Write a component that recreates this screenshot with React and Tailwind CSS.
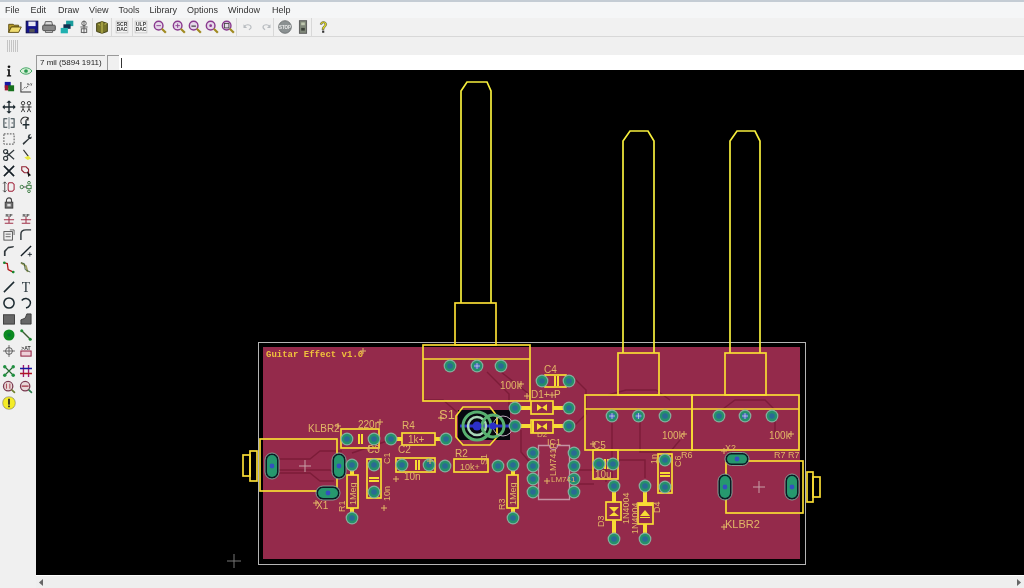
import React from "react";

const menus = [["File", 11], ["Edit", 12], ["Draw", 10], ["View", 10], ["Tools", 10], ["Library", 10], ["Options", 10], ["Window", 12], ["Help", 0]];

// small helper so every toolbar icon has the same box
const Ico = ({ children }) => (
  <svg width="16" height="16" viewBox="0 0 16 16" fill="none" className="block">
    {children}
  </svg>
);

const Zoom = ({ children }) => (
  <Ico>
    <circle cx="6.5" cy="6.5" r="4.8" fill="#e6d8ea" stroke="#8a3a8f" strokeWidth="1.6" />
    <path d="M10 10l4.5 4.5" stroke="#a08a20" strokeWidth="2.4" />
    {children}
  </Ico>
);

const Dac = ({ t }) => (
  <Ico>
    <rect x="1.5" y="1.5" width="13" height="13" fill="#f4f4f4" stroke="#c8c8c8" />
    <text x="8" y="7" textAnchor="middle" fontSize="5.5" fontWeight="700" fill="#333" fontFamily="Liberation Sans, sans-serif">{t}</text>
    <text x="8" y="13" textAnchor="middle" fontSize="5.5" fontWeight="700" fill="#333" fontFamily="Liberation Sans, sans-serif">DAC</text>
  </Ico>
);

const topIcons = [
  { w: 17, el: <Ico><path d="M1 5h5l1 1h5v2H4l-3 6z" fill="#b59a2a" stroke="#5a4a10" /><path d="M4 8h11l-3 6H1z" fill="#f0dc70" stroke="#5a4a10" /></Ico> },
  { w: 17, el: <Ico><rect x="1.5" y="1.5" width="13" height="13" fill="#14148c" stroke="#050540" /><rect x="4" y="2" width="8" height="5" fill="#e8e8f4" /><rect x="5" y="10" width="6" height="4" fill="#555" /></Ico> },
  { w: 17, el: <Ico><path d="M4 2h7l1 4H3z" fill="#ddd" stroke="#555" /><rect x="1" y="6" width="14" height="6" rx="1" fill="#888" stroke="#444" /><path d="M4 12h8v2H4z" fill="#ccc" stroke="#555" /></Ico> },
  { w: 19, el: <Ico><rect x="7" y="1" width="8" height="6" fill="#1a9c9c" /><rect x="4" y="5" width="8" height="5" fill="#103050" /><rect x="1" y="9" width="8" height="6" fill="#20b0b0" /></Ico> },
  { w: 17, sep: true, el: <Ico><circle cx="8" cy="4" r="2.5" stroke="#555" /><path d="M8 1v14M4 8h8" stroke="#555" /><rect x="5" y="10" width="6" height="4" stroke="#555" /></Ico> },
  { w: 19, sep: true, el: <Ico><path d="M2 4l6-2 6 2v9l-6 2-6-2z" fill="#77752a" stroke="#3e3c10" /><path d="M8 2v13" stroke="#d8d060" /><path d="M4 5l2 1M11 5l2-1" stroke="#d8d060" /></Ico> },
  { w: 21, sep: true, el: <Dac t="SCR" /> },
  { w: 16, el: <Dac t="ULP" /> },
  { w: 21, el: <Zoom><path d="M4 6.5h5" stroke="#8a3a8f" /></Zoom> },
  { w: 17, el: <Zoom><path d="M4 6.5h5M6.5 4v5" stroke="#8a3a8f" /></Zoom> },
  { w: 16, el: <Zoom><path d="M4 7h5" stroke="#444" strokeWidth="1.4" /></Zoom> },
  { w: 17, el: <Zoom><circle cx="6.5" cy="6.5" r="1.5" fill="#8a3a8f" /></Zoom> },
  { w: 17, sep: true, el: <Zoom><rect x="4" y="4" width="5" height="5" stroke="#444" /></Zoom> },
  { w: 21, el: <Ico><path d="M4 7c2-2 6-2 7 0 1 2 0 3-2 4" stroke="#b8bcc0" strokeWidth="1.3" /><path d="M3 5v4h4z" fill="#b8bcc0" /></Ico> },
  { w: 16, sep: true, el: <Ico><path d="M12 7c-2-2-6-2-7 0-1 2 0 3 2 4" stroke="#b8bcc0" strokeWidth="1.3" /><path d="M13 5v4H9z" fill="#b8bcc0" /></Ico> },
  { w: 21, el: <Ico><circle cx="8" cy="8" r="7" fill="#8b9192" stroke="#6d7273" /><text x="8" y="10" textAnchor="middle" fontSize="5" fontWeight="700" fill="#eee" fontFamily="Liberation Sans, sans-serif">STOP</text></Ico> },
  { w: 17, sep: true, el: <Ico><rect x="4" y="1" width="8" height="14" fill="#80887a" stroke="#555" /><rect x="6" y="3" width="4" height="3" fill="#c0c8b0" /><rect x="6" y="9" width="4" height="3" fill="#3a4038" /></Ico> },
  { w: 21, el: <Ico><path d="M5 5c0-4 7-4 7 0 0 3-3 3-3 6H7c0-4 3-4 3-6 0-2-3-2-3 0z" fill="#e8e020" stroke="#333" strokeWidth=".6" /><rect x="7" y="12" width="2.4" height="2.4" fill="#333" /></Ico> },
];

const Line = ({ d, c = "#222", w = 1.6 }) => <path d={d} stroke={c} strokeWidth={w} />;

const rip = (
  <Ico>
    <path d="M2 9h12M8 5v8M3 13h10" stroke="#a03048" strokeWidth="1.2" />
    <text x="8" y="6" textAnchor="middle" fontSize="5" fontWeight="700" fill="#444" fontFamily="Liberation Sans, sans-serif">RIP</text>
  </Ico>
);

const sideGroups = [
  [
    <Ico><circle cx="8" cy="3" r="1.6" fill="#111" /><path d="M6 6h3v7h1.5v1.5h-5V13H7V7.5H6z" fill="#111" /></Ico>,
    <Ico><path d="M1 8c3-5 11-5 14 0-3 5-11 5-14 0z" fill="#d8f0d8" stroke="#2a9a50" /><circle cx="8" cy="8" r="2.2" fill="#2a9a50" /></Ico>,
    <Ico><rect x="3" y="2" width="7" height="7" fill="#1515a0" /><rect x="7" y="6" width="7" height="7" fill="#16701c" /><rect x="3" y="6" width="4" height="6" fill="#a01530" /></Ico>,
    <Ico><Line d="M2 2v12h12" c="#333" w="1.2" /><path d="M4 11l3-3 2 1 3-5" stroke="#444" strokeDasharray="1.5 1" /><text x="9" y="6" fontSize="5" fill="#333" fontFamily="Liberation Sans, sans-serif">x,y</text></Ico>,
  ],
  [
    <Ico><Line d="M8 1v14M1 8h14" c="#1e2a30" /><path d="M8 0l3 3H5zM8 16l3-3H5zM0 8l3-3v6zM16 8l-3-3v6z" fill="#1e2a30" /></Ico>,
    <Ico><g stroke="#333" strokeWidth="1.1"><circle cx="4.5" cy="3.5" r="2" /><circle cx="11.5" cy="3.5" r="2" /><path d="M4.5 6v4l-2 4M4.5 10l2 4M1.5 8h6M11.5 6v4l-2 4M11.5 10l2 4M8.5 8h6" /></g></Ico>,
    <Ico><Line d="M8 1v14" c="#6a7a80" w="1" /><path d="M6 3H2v10h4M10 3h4v10h-4" stroke="#2a3a40" strokeWidth="1.2" /><path d="M3 8h2M11 8h2" stroke="#2a3a40" /></Ico>,
    <Ico><path d="M3 9a5 5 0 0 1 8-6" stroke="#333" strokeWidth="1.4" /><path d="M11 1v4H7z" fill="#333" /><Line d="M8 5v10M4 10h8" c="#1e2a30" /></Ico>,
    <Ico><rect x="2" y="2" width="12" height="12" stroke="#333" strokeDasharray="2 1.5" /></Ico>,
    <Ico><path d="M14 2l-3 1-1 3 1 1-7 6 1 2 7-7 2 0 1-3-2 1-1-1z" fill="#30383c" /></Ico>,
    <Ico><path d="M14 2L5 10M14 13L5 5" stroke="#30383c" strokeWidth="1.5" /><circle cx="4" cy="4" r="2.4" stroke="#30383c" strokeWidth="1.4" /><circle cx="4" cy="12" r="2.4" stroke="#30383c" strokeWidth="1.4" /></Ico>,
    <Ico><path d="M5 2l6 8" stroke="#333" strokeWidth="1.3" /><path d="M6 11l5-2 3 3-4 2z" fill="#eaea40" /></Ico>,
    <Ico><path d="M2 2l12 12M14 2L2 14" stroke="#151f26" strokeWidth="2" /></Ico>,
    <Ico><path d="M3 3h5l3 3v4H6L3 7z" stroke="#902030" strokeWidth="1.3" /><path d="M9 8l5 5-2 .5-1 2z" fill="#111" /></Ico>,
    <Ico><path d="M3 2v12M1 4l2-2 2 2M1 12l2 2 2-2" stroke="#333" /><path d="M8 3h4l2 2v6l-2 2H8l-1-2V5z" stroke="#a02038" strokeWidth="1.2" /></Ico>,
    <Ico><circle cx="3" cy="8" r="2" stroke="#287030" /><path d="M5 8h4" stroke="#333" /><rect x="9" y="6" width="5" height="4" stroke="#287030" /><circle cx="11.5" cy="3" r="1.6" stroke="#287030" /><circle cx="11.5" cy="13" r="1.6" stroke="#287030" /></Ico>,
    <Ico><path d="M5 7V5a3 3 0 0 1 6 0v2" stroke="#444" strokeWidth="1.3" /><rect x="3.5" y="7" width="9" height="7" fill="#707070" stroke="#333" /><rect x="6" y="9" width="4" height="3" fill="#ddd" /></Ico>,
    <span />,
    rip,
    rip,
    <Ico><rect x="2" y="4" width="10" height="10" stroke="#444" /><path d="M4 7h6M4 10h6M9 2h5v6" stroke="#555" /></Ico>,
    <Ico><path d="M2 14V7q0-5 6-5h6" stroke="#30383c" strokeWidth="1.7" /></Ico>,
    <Ico><path d="M2 14V8l5-5 7-1-1 2-6 1-3 4v5z" fill="#30383c" /></Ico>,
    <Ico><Line d="M2 14L14 2" c="#151f26" /><path d="M10 12h5M12.5 9.5v5" stroke="#151f26" /></Ico>,
    <Ico><Line d="M2 3l4 1 1 7 6 3" c="#b01818" w="1.5" /><circle cx="2.5" cy="3" r="1.6" fill="#168a30" /><circle cx="13" cy="14" r="1.6" fill="#168a30" /></Ico>,
    <Ico><Line d="M2 3l6 4 2 7" c="#a0a060" w="2" /><Line d="M2 3l4 1 1 7 6 3" c="#305030" w="1" /></Ico>,
  ],
  [
    <Ico><Line d="M2 14L14 2" c="#1c2a30" w="1.8" /></Ico>,
    <Ico><text x="8" y="14" textAnchor="middle" fontSize="16" fill="#1c2a30" fontFamily="Liberation Serif, serif">T</text></Ico>,
    <Ico><circle cx="8" cy="8" r="6" stroke="#1c2a30" strokeWidth="1.8" /></Ico>,
    <Ico><path d="M3 5a6 6 0 0 1 10 1c1 3-1 7-5 8" stroke="#1c2a30" strokeWidth="1.8" /></Ico>,
    <Ico><rect x="1.5" y="3" width="13" height="11" fill="#666" stroke="#333" /></Ico>,
    <Ico><path d="M2 14V9l5-2 2-5h5v12z" fill="#666" stroke="#333" /></Ico>,
    <Ico><circle cx="8" cy="8" r="6.5" fill="#0c8a20" /><circle cx="8" cy="8" r="2" fill="#073" /></Ico>,
    <Ico><Line d="M3 3l10 10" c="#3a5a30" w="1.6" /><circle cx="3" cy="3" r="1.8" fill="#1a8a30" /><circle cx="13" cy="13" r="1.8" fill="#1a8a30" /></Ico>,
    <Ico><circle cx="8" cy="8" r="4" stroke="#444" /><path d="M8 1v14M1 8h14" stroke="#555" /></Ico>,
    <Ico><text x="8" y="6.5" textAnchor="middle" fontSize="6" fontWeight="700" fill="#333" fontFamily="Liberation Sans, sans-serif">{">AT"}</text><rect x="2" y="8" width="12" height="6" fill="#eed0d8" stroke="#902040" strokeWidth="1.2" /></Ico>,
  ],
  [
    <Ico><path d="M3 3l10 10M13 3L3 13" stroke="#256a30" strokeWidth="1.4" /><circle cx="3" cy="3" r="2" fill="#1f9040" /><circle cx="13" cy="3" r="2" fill="#1f9040" /><circle cx="3" cy="13" r="2" fill="#1f9040" /><circle cx="13" cy="13" r="2" fill="#1f9040" /></Ico>,
    <Ico><path d="M5 1v14M11 1v14" stroke="#a01870" strokeWidth="1.6" /><path d="M1 5h14" stroke="#1818a0" strokeWidth="1.6" /><path d="M1 11h14" stroke="#b01820" strokeWidth="1.6" /></Ico>,
    <Ico><circle cx="7" cy="7" r="5.5" fill="#e8d8d8" stroke="#7a3a50" strokeWidth="1.5" /><path d="M5 4v6M9 4v6" stroke="#a03040" /><path d="M11 11l4 4" stroke="#708030" strokeWidth="2" /></Ico>,
    <Ico><circle cx="7" cy="7" r="5.5" fill="#e8d8d8" stroke="#7a3a50" strokeWidth="1.5" /><path d="M3 7h8" stroke="#a03040" strokeWidth="1.5" /><path d="M11 11l4 4" stroke="#308050" strokeWidth="2" /></Ico>,
  ],
  [
    <Ico><circle cx="8" cy="8" r="7.5" fill="#f4ec28" stroke="#555" strokeWidth=".6" /><rect x="7" y="3" width="2" height="7" fill="#222" /><rect x="7" y="11" width="2" height="2" fill="#222" /></Ico>,
  ],
];

const YEL = "#f8dc34";
const TXT = "#e2b766";
const pads = [
  [450, 366], [477, 366, 1], [501, 366], [612, 416, 1], [638.5, 416, 1], [665, 416], [719, 416], [745, 416, 1], [772, 416],
  [347, 439], [374, 439], [391, 439], [446, 439], [515, 408], [569, 408], [515, 426], [569, 426], [542, 381], [569, 381],
  [352, 465], [352, 518], [374, 465], [374, 492], [402, 465], [429, 465], [445, 466], [498, 466], [513, 465], [513, 518],
  [533, 453], [533, 466], [533, 479], [533, 492], [574, 453], [574, 466], [574, 479], [574, 492],
  [599, 464], [613, 464], [665, 460], [665, 487], [614, 486], [614, 539], [645, 486], [645, 539],
];
const ovals = [
  [272, 466, 12, 24], [339, 466, 12, 24], [328, 493, 22, 12], [725, 487, 12, 24], [792, 487, 12, 24], [737, 459, 22, 11],
];
const rects = [
  [423, 345, 107, 56], [585, 395, 107, 55], [692, 395, 107, 55], [455, 303, 41, 42], [618, 353, 41, 42], [725, 353, 41, 42],
  [260, 439, 77, 52], [726, 461, 77, 52], [341, 429, 38, 19], [402, 433, 33, 12], [545, 375, 21, 12], [531, 401, 22, 13], [531, 420, 22, 13],
  [367, 459, 14, 39], [396, 458, 39, 14], [347, 475, 11, 33], [454, 459, 34, 13], [507, 475, 11, 33], [593, 450, 25, 29], [658, 454, 14, 39],
  [606, 502, 15, 18], [638, 503, 15, 21], [250, 451, 7, 30], [243, 455, 7, 21], [807, 472, 6, 30], [813, 477, 7, 20],
];
const labels = [
  ["KLBR2", 308, 432, 10], ["220n", 358, 428, 10], ["R4", 402, 429, 10], ["1k+", 408, 443, 10], ["C3", 367, 453, 10], ["C2", 398, 453, 10],
  ["R2", 455, 457, 10], ["10k+", 460, 470, 9], ["10n", 404, 480, 10], ["X1", 316, 509, 10], ["100k", 500, 389, 10], ["100k", 662, 439, 10],
  ["100k", 769, 439, 10], ["D1+", 531, 398, 10], ["C4", 544, 373, 10], ["P", 554, 398, 10], ["C5", 593, 449, 10], ["10u", 595, 478, 10],
  ["R6", 681, 458, 9], ["R7 R7", 774, 458, 9], ["X2", 725, 451, 9], ["KLBR2", 725, 528, 11], ["IC1", 547, 445, 9], ["LM741", 551, 482, 8],
  ["D2", 537, 437, 8],
];
const vlabels = [
  ["C1", 390, 464], ["10n", 390, 501], ["R1", 345, 512], ["1Meg", 356, 505], ["R3", 505, 510], ["1Meg", 516, 505], ["S1", 487, 465],
  ["LM741P", 556, 476], ["1n", 657, 464], ["C6", 681, 467], ["D3", 604, 527], ["D4", 660, 513], ["1N4004", 629, 524], ["1N4004", 638, 534],
];
// little origin marks next to the part names
const marks = [
  [363, 351], [338, 426], [380, 422], [369, 448], [430, 461], [396, 479], [521, 384], [684, 434], [791, 434], [316, 503],
  [527, 396], [552, 395], [593, 444], [724, 451], [724, 527], [441, 418], [384, 508], [547, 481],
];
const traces = [
  "M272 459h38l10 -8h22", "M272 473h38l10 8h14", "M352 453l35 -12", "M423 400h20l14 12", "M487 372l22 22v20", "M501 372l28 22",
  "M612 422v62", "M640 422v30h30l10 -12", "M719 412l16 -12h30l10 10v28", "M574 426l12 -12v-24l-12 -12", "M608 395l18 -5h30l14 10",
  "M533 466l-12 -14v-22", "M574 470h32v12", "M645 478v-18h-30", "M574 484h20", "M270 470h60l10 8",
];

const Pad = ({ x, y, blue }) => (
  <g>
    <circle cx={x} cy={y} r="6.4" fill="#86ae9e" />
    <circle cx={x} cy={y} r="5.2" fill="#25906a" />
    <circle cx={x} cy={y} r="2.8" fill={blue ? "#4a62c8" : "#2a6a94"} />
    {blue && <path d={`M${x - 3} ${y}h6M${x} ${y - 3}v6`} stroke="#cfe4e0" strokeWidth=".7" />}
  </g>
);

const Oval = ({ x, y, w, h }) => (
  <g>
    <rect x={x - w / 2 - 1} y={y - h / 2 - 1} width={w + 2} height={h + 2} rx={Math.min(w, h) / 2 + 1} fill="#0c1a24" stroke="#8fb8a8" strokeWidth=".8" />
    <rect x={x - w / 2 + 1} y={y - h / 2 + 1} width={w - 2} height={h - 2} rx={Math.min(w, h) / 2 - 1} fill="#26986e" />
    <circle cx={x} cy={y} r="2.4" fill="#3450c0" />
  </g>
);

const Cross = ({ x, y, s = 7, c = "#c8a0a8" }) => (
  <path d={`M${x - s} ${y}h${s * 2}M${x} ${y - s}v${s * 2}`} stroke={c} strokeWidth="1" />
);

const Board = () => (
  <svg viewBox="36 70 988 505" className="block w-full h-full bg-black font-['Liberation_Sans',sans-serif]">
    {/* outline and copper pour */}
    <rect x="258.5" y="342.5" width="547" height="222" fill="none" stroke="#b4b4b4" />
    <rect x="263" y="347" width="537" height="212" fill="#942a4b" />
    <g fill="none" stroke="#7c1c38" strokeWidth="1.4">
      {traces.map((d, i) => <path key={i} d={d} />)}
    </g>

    {/* pot shafts */}
    <g fill="none" stroke="#f6ee3c" strokeWidth="1.7">
      <path d="M461 303V91l6-9h20l4 9v212" />
      <path d="M623 353V141l7-10h18l6 10v212" />
      <path d="M730 353V141l7-10h18l5 10v212" />
    </g>
    <g fill="none" stroke={YEL} strokeWidth="1.7">
      <path d="M423 359h107M585 409h107M692 409h107" />
      {rects.map(([x, y, w, h], i) => <rect key={i} x={x} y={y} width={w} height={h} />)}
    </g>

    {/* diode legs and bodies */}
    <g stroke={YEL} strokeWidth="4">
      <path d="M521 408h10M553 408h10M521 426h10M553 426h10M614 492v10M614 520v13M645 492v11M645 524v9M352 471v4M352 508v4M513 471v4M513 508v4M435 439h5M397 439h5" />
    </g>
    <g fill={YEL}>
      <path d="M537 404v7l5-3.5zM547 404v7l-5-3.5zM537 423v7l5-3.5zM547 423v7l-5-3.5zM609 507h10l-5 5zM609 516h10l-5-4zM640 516h10l-5-6zM640 517h10v1h-10zM532 420h2v13h-2zM638 503h15v3h-15z" />
      <rect x="358" y="434" width="2" height="10" /><rect x="361" y="434" width="2" height="10" />
      <rect x="415" y="460" width="2" height="10" /><rect x="418" y="460" width="2" height="10" />
      <rect x="369" y="477" width="10" height="2" /><rect x="369" y="480" width="10" height="2" />
      <rect x="660" y="472" width="10" height="2" /><rect x="660" y="475" width="10" height="2" />
      <rect x="604" y="459" width="2" height="10" /><rect x="607" y="459" width="2" height="10" />
      <rect x="554" y="376" width="2" height="10" /><rect x="557" y="376" width="2" height="10" />
    </g>
    <path d="M538.5 445.5h11a4 4 0 0 0 8 0h12v54h-31z" fill="none" stroke="#c494a4" strokeWidth="1.3" />

    {/* switch S1 */}
    <rect x="458" y="410" width="52" height="30" fill="#07070f" />
    <path d="M463 407h27l7 9v21l-7 8h-27l-7-8v-21z" fill="none" stroke={YEL} strokeWidth="1.7" />
    <path d="M460 426h55" stroke="#2c30c8" strokeWidth="3" />
    <g fill="none">
      <circle cx="477" cy="426" r="14" stroke="#58b070" strokeWidth="3" />
      <circle cx="477" cy="426" r="9" stroke="#a8d8b8" strokeWidth="2.5" />
      <circle cx="493" cy="426" r="11" stroke="#58b070" strokeWidth="3" />
      <circle cx="503" cy="426" r="10" stroke="#c0b0c0" strokeWidth="1" />
    </g>
    <circle cx="477" cy="426" r="4.5" fill="#2c30c8" />
    <circle cx="493" cy="426" r="3.5" fill="#2c30c8" />

    {ovals.map(([x, y, w, h], i) => <Oval key={i} x={x} y={y} w={w} h={h} />)}
    {pads.map(([x, y, b], i) => <Pad key={i} x={x} y={y} blue={b} />)}

    <Cross x={305} y={466} s={6} />
    <Cross x={759} y={487} s={6} />
    <Cross x={234} y={561} s={7} c="#777" />

    <text x="266" y="357" fill="#f0c23c" fontSize="9" fontWeight="700" className="font-['Liberation_Mono',monospace]">Guitar Effect v1.0</text>
    <text x="439" y="419" fill={TXT} fontSize="13">S1</text>

    {labels.map(([t, x, y, s]) => (
      <text key={t + x} x={x} y={y} fill={TXT} fontSize={s}>{t}</text>
    ))}
    {vlabels.map(([t, x, y]) => (
      <text key={t + x} x={x} y={y} fill={TXT} fontSize="9" transform={`rotate(-90 ${x} ${y})`}>{t}</text>
    ))}
    {marks.map(([x, y], i) => <Cross key={i} x={x} y={y} s={3} c={TXT} />)}
  </svg>
);

const App = () => {
  return (
    <div className="w-[1024px] h-[588px] flex flex-col overflow-hidden bg-[#f0f0f0] blur-[0.35px] font-['Liberation_Sans',sans-serif]">
      <div className="h-[2px] bg-[#c4ccd4]" />
      {/* Menu bar */}
      <div className="h-[16px] flex items-center pl-[5px] pt-[2px] bg-[#f5f6f7] text-[9px] text-[#333]">
        {menus.map(([m, gap]) => <span key={m} style={{ marginRight: gap }}>{m}</span>)}
      </div>
      {/* Main toolbar */}
      <div className="h-[19px] flex items-center pl-[6px] bg-[#f1f1f1] border-b border-[#d8d8d8]">
        {topIcons.map((t, i) => (
          <div key={i} className={`flex justify-center h-[18px] items-center shrink-0 ${t.sep ? "border-r border-[#d8d8d8]" : ""}`} style={{ width: t.w }}>
            <div className="scale-90">{t.el}</div>
          </div>
        ))}
      </div>
      {/* Second toolbar */}
      <div className="h-[18px] flex items-center pl-[7px] bg-[#f0f0f0]">
        <svg width="12" height="12" viewBox="0 0 12 12" className="block">
          <path d="M0 1h12M0 3h12M0 5h12M0 7h12M0 9h12M0 11h12" stroke="#999" strokeWidth="1" strokeDasharray="1 1" />
        </svg>
      </div>

      <div className="flex flex-1 min-h-0">
        {/* Left toolbar */}
        <div className="w-[36px] shrink-0 flex flex-col pt-[8px] bg-[#f0f0f0]">
          {sideGroups.map((g, i) => (
            <div key={i} className={`grid grid-cols-[17px_17px] auto-rows-[16px] justify-items-center items-center ${i > 0 && i < 4 ? "mt-[4px]" : ""}`}>
              {g.map((el, j) => <div key={j} className="scale-[0.85]">{el}</div>)}
            </div>
          ))}
        </div>

        <div className="flex-1 min-w-0 flex flex-col">
          {/* Coordinate row */}
          <div className="h-[15px] flex text-[8px] text-[#222] leading-[14px]">
            <div className="w-[69px] pl-[3px] whitespace-nowrap border-l border-t border-[#999] bg-[#f0f0f0]">7 mil (5894 1911)</div>
            <div className="w-[12px] ml-[2px] border-l border-t border-[#999] bg-[#f0f0f0]" />
            <div className="flex-1 bg-white pl-[2px] flex items-center">
              <div className="w-px h-[10px] bg-[#333]" />
            </div>
          </div>
          {/* Canvas */}
          <div className="h-[505px]">
            <Board />
          </div>
          {/* Scrollbar */}
          <div className="flex-1 flex items-center justify-between px-[3px] bg-[#eeeeee] border-t border-white">
            <svg width="5" height="7" viewBox="0 0 5 7"><path d="M4 0v7L0 3.5z" fill="#666" /></svg>
            <svg width="5" height="7" viewBox="0 0 5 7"><path d="M1 0v7l4-3.5z" fill="#666" /></svg>
          </div>
        </div>
      </div>
    </div>
  );
};

export default App;
